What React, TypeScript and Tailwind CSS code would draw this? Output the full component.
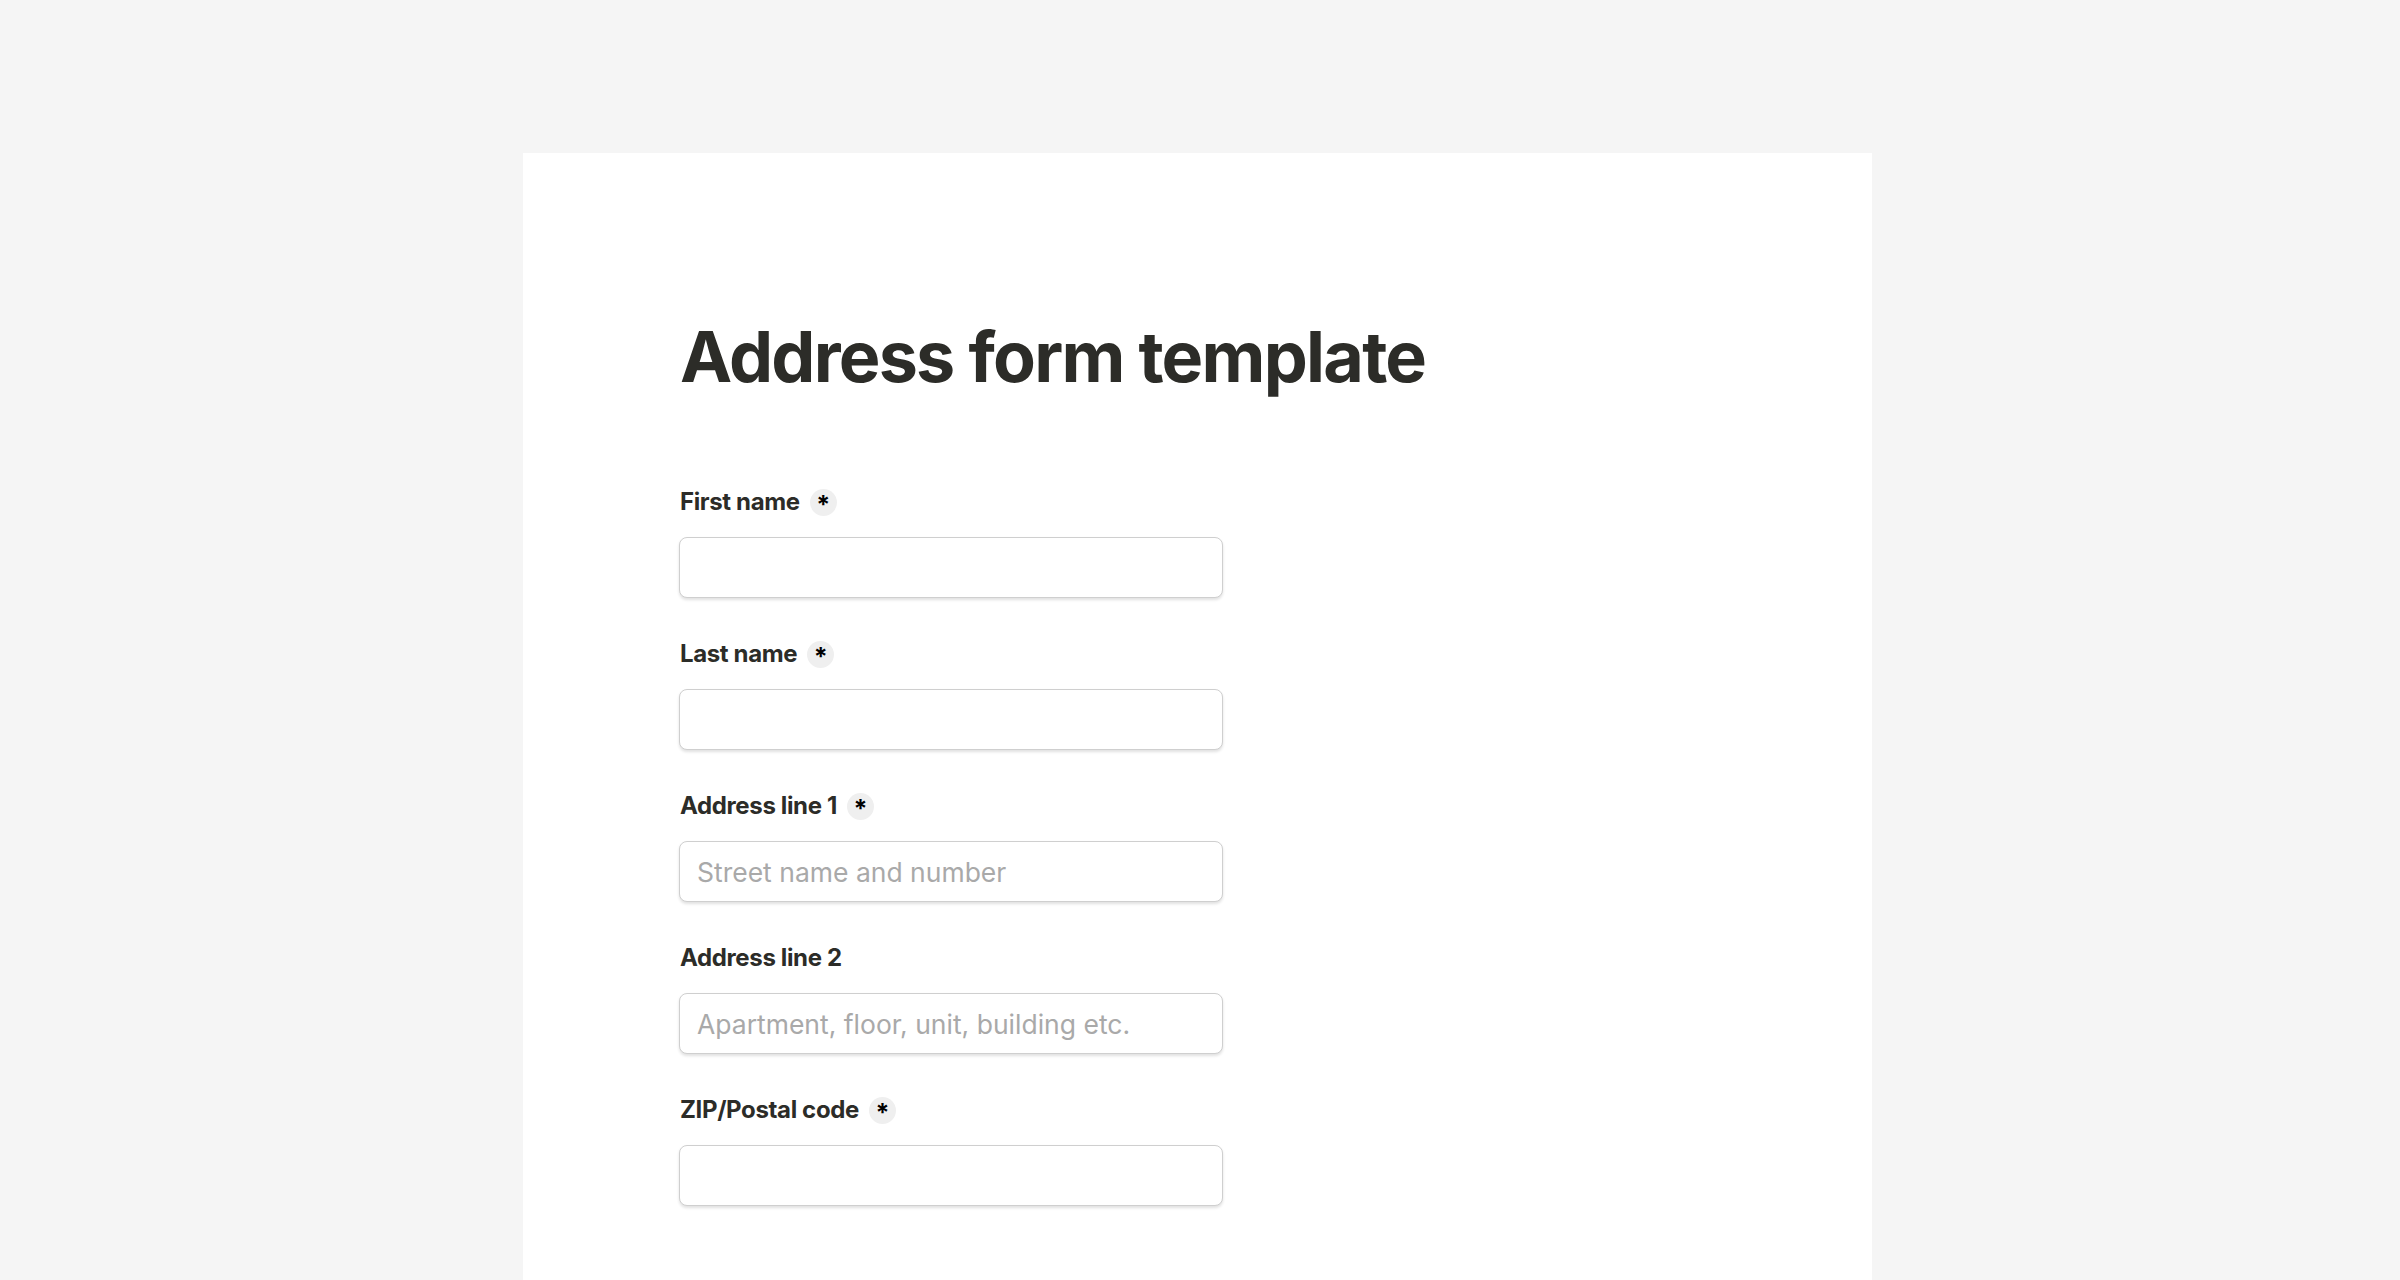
import React from "react";

const fields = [
  { label: "First name", required: true, placeholder: "" },
  { label: "Last name", required: true, placeholder: "" },
  { label: "Address line 1", required: true, placeholder: "Street name and number" },
  { label: "Address line 2", required: false, placeholder: "Apartment, floor, unit, building etc." },
  { label: "ZIP/Postal code", required: true, placeholder: "" },
];

function Field({ label, required, placeholder }: { label: string; required: boolean; placeholder: string }) {
  return (
    <div className="flex flex-col">
      <div className="flex h-[30px] items-center">
        <span className="text-[24px] font-bold tracking-[-0.015em] text-[#2c2c28]">{label}</span>
        {required && (
          <span className="ml-[10px] flex h-[27px] w-[27px] items-center justify-center rounded-full bg-[#efefef] pt-[7px] text-[25px] font-bold leading-none text-black">
            *
          </span>
        )}
      </div>
      <input
        type="text"
        placeholder={placeholder}
        className="-ml-px mt-[20px] h-[61px] w-[544px] rounded-[8px] border border-[#cfcfcf] bg-white px-[17px] text-[26.5px] text-[#2c2c28] shadow-[0_2px_3px_rgba(0,0,0,0.12)] outline-none placeholder:text-[#a9a9a9]"
      />
    </div>
  );
}

export default function App() {
  return (
    <div
      className="min-h-screen bg-[#f5f5f5]"
      style={{ fontFamily: "Inter, 'Noto Sans', sans-serif" }}
    >
      <div className="pt-[153px]">
        <div className="ml-[523px] h-[1127px] w-[1349px] bg-white pl-[157px] pt-[162px]">
          <h1 className="text-[70px] font-bold leading-[84px] tracking-[-0.025em] text-[#2c2c28]">
            Address form template
          </h1>
          <div className="mt-[88px] flex flex-col gap-[41px]">
            {fields.map((f) => (
              <Field key={f.label} {...f} />
            ))}
          </div>
        </div>
      </div>
    </div>
  );
}
